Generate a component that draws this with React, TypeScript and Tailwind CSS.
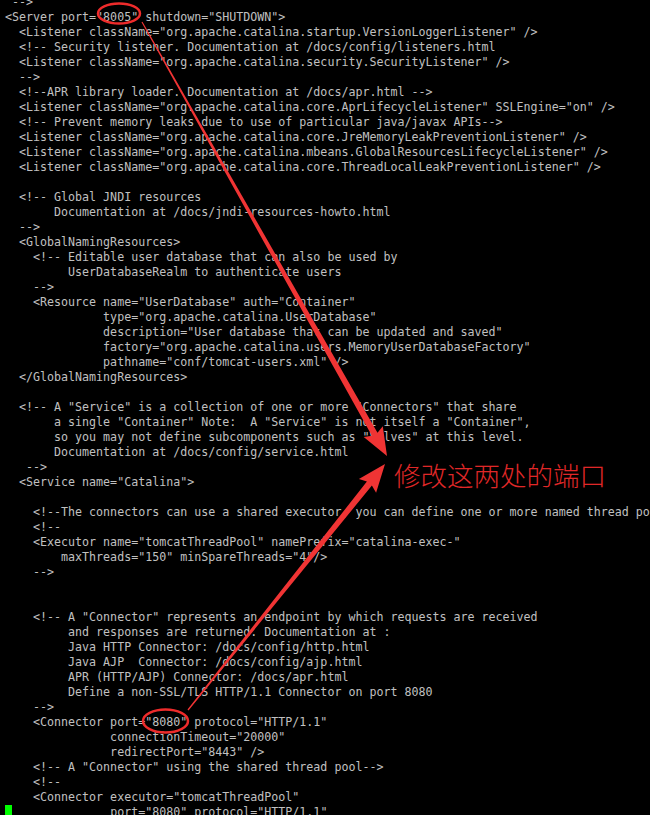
const lines: string[] = [
  ' -->',
  '<Server port="8005" shutdown="SHUTDOWN">',
  '  <Listener className="org.apache.catalina.startup.VersionLoggerListener" />',
  '  <!-- Security listener. Documentation at /docs/config/listeners.html',
  '  <Listener className="org.apache.catalina.security.SecurityListener" />',
  '  -->',
  '  <!--APR library loader. Documentation at /docs/apr.html -->',
  '  <Listener className="org.apache.catalina.core.AprLifecycleListener" SSLEngine="on" />',
  '  <!-- Prevent memory leaks due to use of particular java/javax APIs-->',
  '  <Listener className="org.apache.catalina.core.JreMemoryLeakPreventionListener" />',
  '  <Listener className="org.apache.catalina.mbeans.GlobalResourcesLifecycleListener" />',
  '  <Listener className="org.apache.catalina.core.ThreadLocalLeakPreventionListener" />',
  '',
  '  <!-- Global JNDI resources',
  '       Documentation at /docs/jndi-resources-howto.html',
  '  -->',
  '  <GlobalNamingResources>',
  '    <!-- Editable user database that can also be used by',
  '         UserDatabaseRealm to authenticate users',
  '    -->',
  '    <Resource name="UserDatabase" auth="Container"',
  '              type="org.apache.catalina.UserDatabase"',
  '              description="User database that can be updated and saved"',
  '              factory="org.apache.catalina.users.MemoryUserDatabaseFactory"',
  '              pathname="conf/tomcat-users.xml" />',
  '  </GlobalNamingResources>',
  '',
  '  <!-- A "Service" is a collection of one or more "Connectors" that share',
  '       a single "Container" Note:  A "Service" is not itself a "Container",',
  '       so you may not define subcomponents such as "Valves" at this level.',
  '       Documentation at /docs/config/service.html',
  '   -->',
  '  <Service name="Catalina">',
  '',
  '    <!--The connectors can use a shared executor, you can define one or more named thread pools-->',
  '    <!--',
  '    <Executor name="tomcatThreadPool" namePrefix="catalina-exec-"',
  '        maxThreads="150" minSpareThreads="4"/>',
  '    -->',
  '',
  '',
  '    <!-- A "Connector" represents an endpoint by which requests are received',
  '         and responses are returned. Documentation at :',
  '         Java HTTP Connector: /docs/config/http.html',
  '         Java AJP  Connector: /docs/config/ajp.html',
  '         APR (HTTP/AJP) Connector: /docs/apr.html',
  '         Define a non-SSL/TLS HTTP/1.1 Connector on port 8080',
  '    -->',
  '    <Connector port="8080" protocol="HTTP/1.1"',
  '               connectionTimeout="20000"',
  '               redirectPort="8443" />',
  '    <!-- A "Connector" using the shared thread pool-->',
  '    <!--',
  '    <Connector executor="tomcatThreadPool"',
];

// tapered annotation arrow, like the ones drawn by screenshot tools
function arrowPoints(sx: number, sy: number, tx: number, ty: number) {
  const dx = tx - sx;
  const dy = ty - sy;
  const len = Math.hypot(dx, dy);
  const ux = dx / len;
  const uy = dy / len;
  const nx = -uy;
  const ny = ux;
  const head = 25;
  const wing = 11;
  const w0 = 0.6;
  const w1 = 3.2;
  const bx = tx - ux * head;
  const by = ty - uy * head;
  const wx = bx - ux * 3;
  const wy = by - uy * 3;
  const pts = [
    [sx + nx * w0, sy + ny * w0],
    [bx + nx * w1, by + ny * w1],
    [wx + nx * wing, wy + ny * wing],
    [tx, ty],
    [wx - nx * wing, wy - ny * wing],
    [bx - nx * w1, by - ny * w1],
    [sx - nx * w0, sy - ny * w0],
  ];
  return pts.map((p) => `${p[0].toFixed(1)},${p[1].toFixed(1)}`).join(' ');
}

export default function App() {
  return (
    <div className="relative w-[650px] h-[815px] overflow-hidden bg-black">
      {/* terminal buffer */}
      <pre className="-mt-[5px] pl-[5px] font-['DejaVu_Sans_Mono',monospace] text-[11.65px] leading-[15px] text-[#c0c0c0] whitespace-pre">
        {lines.map((l, i) => (
          <div key={i} className="h-[15px]">
            {l}
          </div>
        ))}
        <div className="h-[15px]">
          <span className="bg-[#00ff00] text-black"> </span>
          {'              port="8080" protocol="HTTP/1.1"'}
        </div>
      </pre>

      {/* red annotations */}
      <svg className="absolute inset-0" width="650" height="815" viewBox="0 0 650 815">
        <ellipse cx="119" cy="13.5" rx="21" ry="10" fill="none" stroke="#ee2b2b" strokeWidth="2.5" />
        <ellipse cx="165.5" cy="721" rx="22.5" ry="11.5" fill="none" stroke="#ee2b2b" strokeWidth="2.5" />
        <polygon points={arrowPoints(142, 22, 387, 456)} fill="#f03434" />
        <polygon points={arrowPoints(188, 710, 385, 464)} fill="#f03434" />
      </svg>
      <div className="absolute left-[394px] top-[458px] font-['Noto_Sans_CJK_SC',sans-serif] font-light text-[26.5px] leading-[34px] text-[#e02828]">
        修改这两处的端口
      </div>
    </div>
  );
}
